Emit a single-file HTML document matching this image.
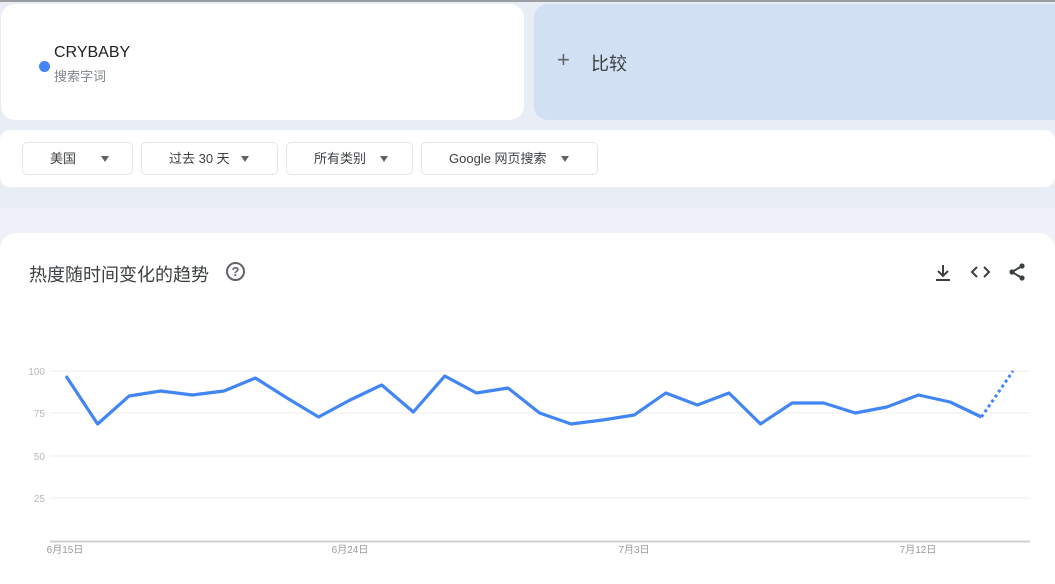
<!DOCTYPE html>
<html><head><meta charset="utf-8"><style>
*{margin:0;padding:0;box-sizing:border-box}
body{width:1055px;height:584px;overflow:hidden;background:#e8edf6;font-family:"Liberation Sans","Noto Sans CJK SC",sans-serif;position:relative}
.top{position:absolute;left:0;top:0;width:1055px;height:2px;background:#9a9da2}
.card{position:absolute;background:#fff}
.btn{position:absolute;top:142px;height:33px;border:1px solid #e3e5e8;border-radius:5px;font-size:13px;color:#3c4043;line-height:31px}
.btn .a{position:absolute;top:13px;width:0;height:0;border-left:4.5px solid transparent;border-right:4.5px solid transparent;border-top:6px solid #5f6368}
</style></head><body>
<div class="top"></div>
<div style="position:absolute;left:0;top:208px;width:1055px;height:376px;background:#eef1f7"></div>
<div class="card" style="left:1px;top:4px;width:523px;height:116px;border-radius:14px"></div>
<div style="position:absolute;left:39px;top:61px;width:11px;height:11px;border-radius:50%;background:#4285f4"></div>
<div style="position:absolute;left:54px;top:44px;font-size:16px;color:#202124">CRYBABY</div>
<div style="position:absolute;left:54px;top:66px;font-size:13px;color:#80868b">搜索字词</div>
<div style="position:absolute;left:534px;top:4px;width:521px;height:116px;border-radius:14px 0 0 14px;background:#d2e0f3"></div>
<div style="position:absolute;left:557px;top:47px;font-size:22px;color:#5f6368;font-weight:300">+</div>
<div style="position:absolute;left:591px;top:50px;font-size:18px;color:#3c4043">比较</div>
<div class="card" style="left:0;top:130px;width:1055px;height:57px;border-radius:10px"></div>
<div class="btn" style="left:22px;width:111px"><span style="position:absolute;left:27px">美国</span><i class="a" style="left:78px"></i></div>
<div class="btn" style="left:141px;width:137px"><span style="position:absolute;left:27px">过去 30 天</span><i class="a" style="left:99px"></i></div>
<div class="btn" style="left:286px;width:127px"><span style="position:absolute;left:27px">所有类别</span><i class="a" style="left:93px"></i></div>
<div class="btn" style="left:421px;width:177px"><span style="position:absolute;left:27px">Google 网页搜索</span><i class="a" style="left:139px"></i></div>
<div class="card" style="left:0;top:233px;width:1055px;height:351px;border-radius:16px 16px 0 0"></div>
<div style="position:absolute;left:29px;top:261px;font-size:18px;color:#3c4043">热度随时间变化的趋势</div>
<div style="position:absolute;left:226px;top:262px;width:19px;height:19px;border:2px solid #5f6368;border-radius:50%;font-size:13px;font-weight:bold;color:#5f6368;text-align:center;line-height:15px">?</div>
<svg style="position:absolute;left:0;top:0" width="1055" height="584">
<g stroke="#3c4043" stroke-width="2" fill="none">
<path d="M943 265v11M938 271l5 5 5-5M936 280h14"/>
<path d="M977 267l-5 5 5 5M984 267l5 5-5 5"/>
<path d="M1022 266l-10 6 10 6"/>
</g>
<g fill="#3c4043"><circle cx="1022" cy="266" r="2.6"/><circle cx="1012" cy="272" r="2.6"/><circle cx="1022" cy="278" r="2.6"/></g>
<g stroke="#ececec" stroke-width="1">
<path d="M50 371H1030M50 413H1030M50 456H1030M50 498H1030"/>
</g>
<path d="M50 541.5H1030" stroke="#cfcfcf" stroke-width="2"/>
<g font-size="10" fill="#b8b8b8" font-family="Liberation Sans,Noto Sans CJK SC,sans-serif" text-anchor="end">
<text x="45" y="375">100</text><text x="45" y="417">75</text><text x="45" y="460">50</text><text x="45" y="502">25</text>
</g>
<g font-size="10" fill="#9a9a9a" font-family="Liberation Sans,Noto Sans CJK SC,sans-serif" text-anchor="middle">
<text x="65" y="553">6月15日</text><text x="350" y="553">6月24日</text><text x="634" y="553">7月3日</text><text x="918" y="553">7月12日</text>
</g>
<polyline fill="none" stroke="#4285f4" stroke-width="3.2" stroke-linejoin="round" points="66,376 97.6,424 129.1,396 160.7,391 192.3,395 223.9,391 255.4,378 287,398 318.6,417 350.1,400 381.7,385 413.3,412 444.8,376 476.4,393 508,388 539.6,413 571.1,424 602.7,420 634.3,415 665.8,393 697.4,405 729,393 760.5,424 792.1,403 823.7,403 855.3,413 886.8,407 918.4,395 950,402 981.5,417"/>
<line x1="981.5" y1="417" x2="1013" y2="371" stroke="#4285f4" stroke-width="3" stroke-dasharray="3 3"/>
</svg>
</body></html>
